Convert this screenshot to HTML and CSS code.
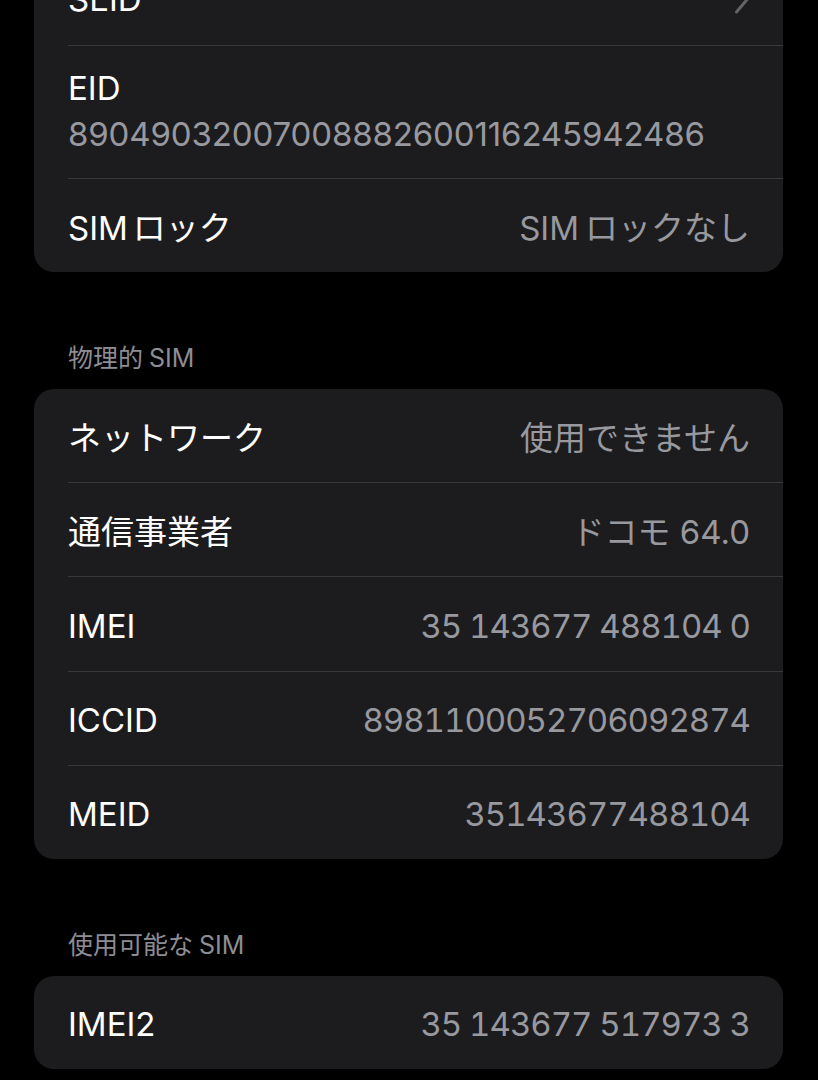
FILE: index.html
```html
<!DOCTYPE html>
<html lang="ja">
<head>
<meta charset="utf-8">
<title>SIM</title>
<link rel="stylesheet" href="styles.css">
</head>
<body>
<div class="page">
  <div class="card first">
    <div class="row">
      <span class="label">SEID</span>
      <svg class="chev" width="16" height="30" viewBox="0 0 16 30"><path d="M2.5 2 L13.5 15 L2.5 28" fill="none" stroke="#636368" stroke-width="3" stroke-linecap="round" stroke-linejoin="round"/></svg>
    </div>
    <div class="row tall">
      <span class="label">EID</span>
      <span class="value mono">89049032007008882600116245942486</span>
    </div>
    <div class="row">
      <span class="label"><span class="lat">SIM</span>ロック</span>
      <span class="value"><span class="latv">SIM</span>ロックなし</span>
    </div>
  </div>

  <div class="header">物理的<span class="latl">SIM</span></div>
  <div class="card">
    <div class="row"><span class="label">ネットワーク</span><span class="value">使用できません</span></div>
    <div class="row"><span class="label">通信事業者</span><span class="value">ドコモ 64.0</span></div>
    <div class="row"><span class="label">IMEI</span><span class="value num">35 143677 488104 0</span></div>
    <div class="row"><span class="label">ICCID</span><span class="value num">8981100052706092874</span></div>
    <div class="row"><span class="label">MEID</span><span class="value num">35143677488104</span></div>
  </div>

  <div class="header">使用可能な<span class="latl">SIM</span></div>
  <div class="card">
    <div class="row"><span class="label">IMEI2</span><span class="value num">35 143677 517973 3</span></div>
  </div>
</div>
</body>
</html>
```

FILE: styles.css
```css
html, body {
  margin: 0;
  padding: 0;
  background: #000;
}
body {
  font-family: Inter, "Noto Sans CJK JP", sans-serif;
  color: #fff;
  overflow: hidden;
  height: 1080px;
}
.page {
  padding: 0 35px 0 34px;
  margin-top: -48px;
}
.card {
  background: #1c1c1e;
  border-radius: 20px;
  overflow: hidden;
}
.row {
  display: flex;
  align-items: center;
  justify-content: space-between;
  box-sizing: border-box;
  margin-left: 34px;
  padding-right: 33px;
  padding-top: 4px;
  height: 94.2px;
  border-bottom: 1px solid #38383a;
  font-size: 33px;
}
.first .row {
  height: 94px;
}
.row:last-child,
.first .row:last-child {
  border-bottom: none;
  height: 93px;
}
.first .row:first-child {
  padding-top: 0;
}
.first .row.tall {
  height: 133px;
  flex-direction: column;
  align-items: flex-start;
  justify-content: flex-start;
  padding-top: 22px;
}
.row.tall .value {
  margin-top: 6px;
}
.label {
  color: #fff;
  line-height: 40px;
}
.value {
  color: #98989f;
  line-height: 40px;
}
.num {
  font-variant-numeric: tabular-nums;
  letter-spacing: -1px;
}
.mono {
  letter-spacing: -0.13px;
}
.lat {
  margin-right: 5px;
}
.latv {
  margin-right: 6px;
}
.latl {
  margin-left: 6px;
}
.chev {
  display: block;
}
.header {
  margin: 72px 0 17px 34px;
  font-size: 25px;
  line-height: 28px;
  color: #8d8d93;
}
```
